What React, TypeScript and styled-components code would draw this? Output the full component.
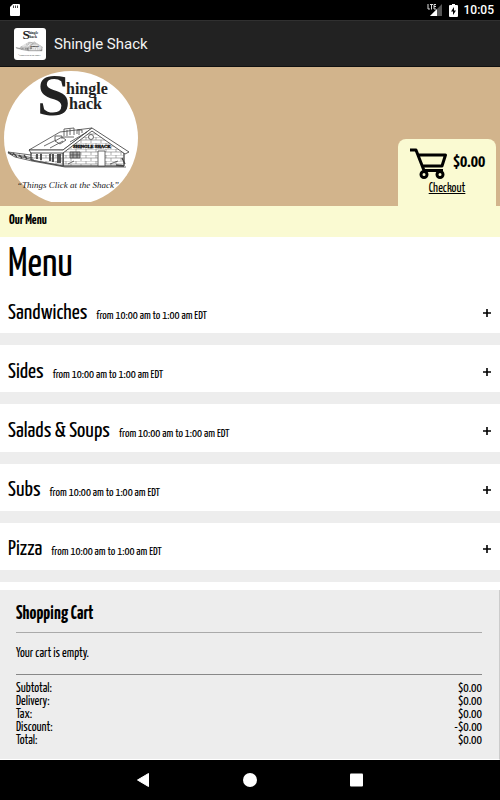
import React from "react";
import styled, { createGlobalStyle } from "styled-components";

const GlobalStyle = createGlobalStyle`
  * { box-sizing: border-box; }
  body {
    margin: 0;
    background: #fff;
    color: #000;
    font-family: "Yanone Kaffeesatz", "Liberation Sans Narrow", "Liberation Sans", sans-serif;
  }
  h1, h2, h3, p, dl, dd, dt { margin: 0; font-weight: 400; }
  button { font: inherit; color: inherit; border: 0; padding: 0; background: none; cursor: pointer; }
  svg { display: block; }
`;

const Page = styled.div`
  display: flex;
  flex-direction: column;
  min-height: 100vh;
`;

const StatusBar = styled.div`
  display: flex;
  align-items: center;
  justify-content: space-between;
  height: 20px;
  padding: 0 6px 0 10px;
  background: #000;
  color: #fff;
  font: 500 12px/20px Roboto, sans-serif;
`;

const StatusIcons = styled.div`
  display: flex;
  align-items: center;
  gap: 6px;
`;

const AppBar = styled.header`
  display: flex;
  align-items: center;
  gap: 8px;
  height: 47px;
  padding: 0 14px;
  background: #222;
  border-top: 1px solid #303030;
  border-bottom: 1px solid #111;
  color: #f3f3f3;
  font: 400 15px/20px Roboto, sans-serif;
`;

const AppIcon = styled.div`
  width: 32px;
  height: 32px;
  padding: 1px;
  border-radius: 3px;
  background: #fff;
`;

const Banner = styled.div`
  display: flex;
  align-items: flex-end;
  justify-content: space-between;
  height: 139px;
  padding: 0 4px;
  background: #d2b48c;
`;

const BannerLogo = styled.div`
  align-self: flex-start;
  padding-top: 4px;
`;

const CartTab = styled.div`
  display: flex;
  flex-direction: column;
  align-items: center;
  width: 98px;
  height: 67px;
  padding-top: 8px;
  border-radius: 8px 8px 0 0;
  background: #fafad2;
`;

const CartAmount = styled.div`
  display: flex;
  align-items: center;
  gap: 4px;
  font-size: 18px;
  line-height: 30px;
  font-weight: 700;
`;

const CheckoutLink = styled.a`
  color: #000;
  font-size: 13px;
  line-height: 20px;
`;

const Nav = styled.nav`
  height: 31px;
  padding: 0 9px;
  background: #fafad2;
  font-size: 14px;
  line-height: 30px;
  font-weight: 700;
`;

const NavLink = styled.a`
  color: #000;
  text-decoration: none;
`;

const Main = styled.main`
  display: flex;
  flex: 1;
  flex-direction: column;
  padding-bottom: 8px;
`;

const Title = styled.h1`
  padding-left: 8px;
  height: 49px;
  font-size: 40px;
  line-height: 57px;
`;

const Category = styled.button`
  display: flex;
  flex: 1;
  align-items: center;
  justify-content: space-between;
  min-height: 59px;
  padding: 6px 9px 0 8px;
  border-bottom: 12px solid #ededed;
  text-align: left;
`;

const CategoryText = styled.span`
  display: flex;
  align-items: baseline;
  gap: 9px;
`;

const CategoryName = styled.span`
  font-size: 22px;
  line-height: 30px;
`;

const Hours = styled.span`
  font-size: 12px;
`;

const Cart = styled.section`
  padding: 9px 17px 0 16px;
  height: 170px;
  border-right: 1px solid #ccc;
  border-bottom: 1px solid #fff;
  background: #ededed;
`;

const CartTitle = styled.h2`
  height: 34px;
  border-bottom: 1px solid #aaa;
  font-size: 19px;
  line-height: 30px;
  font-weight: 700;
`;

const Empty = styled.p`
  height: 42px;
  border-bottom: 1px solid #888;
  font-size: 13px;
  line-height: 41px;
`;

const Totals = styled.dl`
  padding-top: 7px;
  font-size: 13px;
  line-height: 13px;
`;

const TotalRow = styled.div`
  display: flex;
  justify-content: space-between;
`;

const SystemBar = styled.nav`
  display: flex;
  align-items: center;
  justify-content: center;
  gap: 67px;
  height: 40px;
  background: #000;
`;

const SystemButton = styled.button`
  width: 40px;
  height: 40px;
`;

function ShackLogo({ width, height, round }: { width: number; height: number; round?: boolean }) {
  const id = round ? "logo-round" : "logo-square";
  return (
    <svg width={width} height={height} viewBox="0 0 134 131" role="img" aria-label="Shingle Shack">
      <defs>
        <clipPath id={id}>{round ? <circle cx="67" cy="67" r="67" /> : <rect width="134" height="131" />}</clipPath>
        <pattern id={id + "-brick"} width="10" height="6" patternUnits="userSpaceOnUse">
          <path d="M0 0H10M0 3H10M2 0V3M7 3V6" stroke="#777" strokeWidth=".6" fill="none" />
        </pattern>
      </defs>
      <g clipPath={`url(#${id})`}>
        <rect width="134" height="131" fill="#fff" />
      </g>
      <g fill="#222" fontFamily="Liberation Serif, serif" fontWeight="700">
        <text x="33" y="44" fontSize="60">S</text>
        <text x="62" y="23" fontSize="16">hingle</text>
        <text x="65" y="38" fontSize="16">hack</text>
      </g>
      <g stroke="#444" strokeWidth=".8" fill="none" strokeLinejoin="round">
        <path d="M59 80 88 59 120 79V95H59Z" fill="#fff" />
        <path d="M59 80 88 59 120 79V95H59Z" fill={`url(#${id}-brick)`} />
        <path d="M27 80V89L59 95V80Z" fill="#fff" />
        <path d="M27 80V89L59 95V80Z" fill={`url(#${id}-brick)`} />
        <path d="M25 79 56 61 88 57 59 79Z" fill="#fff" />
        <path d="M25 79 27 82 59 82 88 60 121 83 125 81 88 57 59 79Z" fill="#fff" stroke="#333" />
        <path d="M60 65V58L70 57V64M73 63V59H78V62M63 59V65M66 58V64M51 70 58 66 62 69 56 73ZM51 65H58V68M51 65V69M59 66H70M40 75 52 69M46 77 59 70M66 71 83 61M75 58V64" />
        <path d="M33 83V88M37 83V89M46 83V90M49 83V91M54 83V92M56 83V92" strokeWidth="1.8" />
        <path d="M66 81H76V87H66ZM69 81V87M73 81V87M66 84H76" fill="#aaa" />
        <path d="M94 80H101V95H94Z" fill="#fff" />
        <circle cx="87" cy="66" r="2.500" fill="#fff" />
        <path d="M27 84 4 81M29 87 8 83M30 89 14 85M4 82 11 86 28 90 61 96 122 96M106 93 114 90M64 93 70 90" />
        <path d="M4 81 9 84M9 82 13 86M15 84 18 87M20 84 23 88M118 87 121 93M112 94 120 95" strokeWidth="1.4" />
      </g>
      <text x="69" y="77" fontFamily="Liberation Serif, serif" fontWeight="700" fontSize="4.500" fill="#000" stroke="#000" strokeWidth=".3">SHINGLE SHACK</text>
      <text x="13" y="117" fontFamily="Liberation Serif, serif" fontStyle="italic" fontSize="9" fill="#222">“Things Click at the Shack”</text>
    </svg>
  );
}

const categories = ["Sandwiches", "Sides", "Salads & Soups", "Subs", "Pizza"];

const totals = [
  ["Subtotal:", "$0.00"],
  ["Delivery:", "$0.00"],
  ["Tax:", "$0.00"],
  ["Discount:", "-$0.00"],
  ["Total:", "$0.00"],
];

export default function App() {
  return (
    <>
      <GlobalStyle />
      <Page>
        <StatusBar>
          <svg width="10" height="12" viewBox="0 0 10 12" aria-hidden="true">
            <path d="M3 0H9Q10 0 10 1V11Q10 12 9 12H1Q0 12 0 11V3Z" fill="#fff" />
            <path d="M3.5 1.5V4M5.5 1.5V4M7.5 1.5V4" stroke="#444" />
          </svg>
          <StatusIcons>
            <svg width="16" height="13" viewBox="0 0 16 13" aria-label="LTE signal">
              <path d="M15 0V12H3Z" fill="#555" />
              <path d="M10 5V12H3Z" fill="#fff" />
              <path d="M1 0V5H3M3 .5H6M4.5 0V5.5M9 .5H7V5H9M7 2.5H9" stroke="#ddd" fill="none" />
            </svg>
            <svg width="9" height="13" viewBox="0 0 9 13" aria-label="Battery charging">
              <path d="M3 0H6V1H8Q9 1 9 2V12Q9 13 8 13H1Q0 13 0 12V2Q0 1 1 1H3Z" fill="#fff" />
              <path d="M5 3 2 7.5H4V11L7 6.5H5Z" fill="#000" />
            </svg>
            <time>10:05</time>
          </StatusIcons>
        </StatusBar>
        <AppBar>
          <AppIcon><ShackLogo width={30} height={30} /></AppIcon>
          <span>Shingle Shack</span>
        </AppBar>
        <Banner>
          <BannerLogo><ShackLogo width={134} height={131} round /></BannerLogo>
          <CartTab>
            <CartAmount>
              <svg width="40" height="32" viewBox="0 0 40 32" fill="none" stroke="#000" strokeWidth="3" aria-hidden="true">
                <path d="M1 3H7L15 23.500H34M9 8H36.500L33 19H13.500" strokeLinejoin="round" />
                <circle cx="15" cy="27.500" r="3" />
                <circle cx="31" cy="27.500" r="3" />
              </svg>
              <span>$0.00</span>
            </CartAmount>
            <CheckoutLink href="#checkout">Checkout</CheckoutLink>
          </CartTab>
        </Banner>
        <Nav><NavLink href="#menu">Our Menu</NavLink></Nav>
        <Main id="menu">
          <Title>Menu</Title>
          {categories.map((name) => (
            <Category key={name} type="button" aria-expanded={false}>
              <CategoryText>
                <CategoryName>{name}</CategoryName>
                <Hours>from 10:00 am to 1:00 am EDT</Hours>
              </CategoryText>
              <svg width="8" height="8" viewBox="0 0 8 8" aria-hidden="true">
                <path d="M4 0V8M0 4H8" stroke="#000" strokeWidth="1.6" />
              </svg>
            </Category>
          ))}
        </Main>
        <Cart id="checkout">
          <CartTitle>Shopping Cart</CartTitle>
          <Empty>Your cart is empty.</Empty>
          <Totals>
            {totals.map(([label, value]) => (
              <TotalRow key={label}>
                <dt>{label}</dt>
                <dd>{value}</dd>
              </TotalRow>
            ))}
          </Totals>
        </Cart>
        <SystemBar aria-label="System navigation">
          <SystemButton type="button" aria-label="Back">
            <svg width="40" height="40" viewBox="0 0 40 40"><path d="M14.500 20 25.500 13.500V26.500Z" fill="#fff" stroke="#fff" strokeLinejoin="round" /></svg>
          </SystemButton>
          <SystemButton type="button" aria-label="Home">
            <svg width="40" height="40" viewBox="0 0 40 40"><circle cx="20" cy="20" r="7" fill="#fff" /></svg>
          </SystemButton>
          <SystemButton type="button" aria-label="Recent apps">
            <svg width="40" height="40" viewBox="0 0 40 40"><rect x="13" y="13.500" width="13" height="13" rx="1" fill="#fff" /></svg>
          </SystemButton>
        </SystemBar>
      </Page>
    </>
  );
}
